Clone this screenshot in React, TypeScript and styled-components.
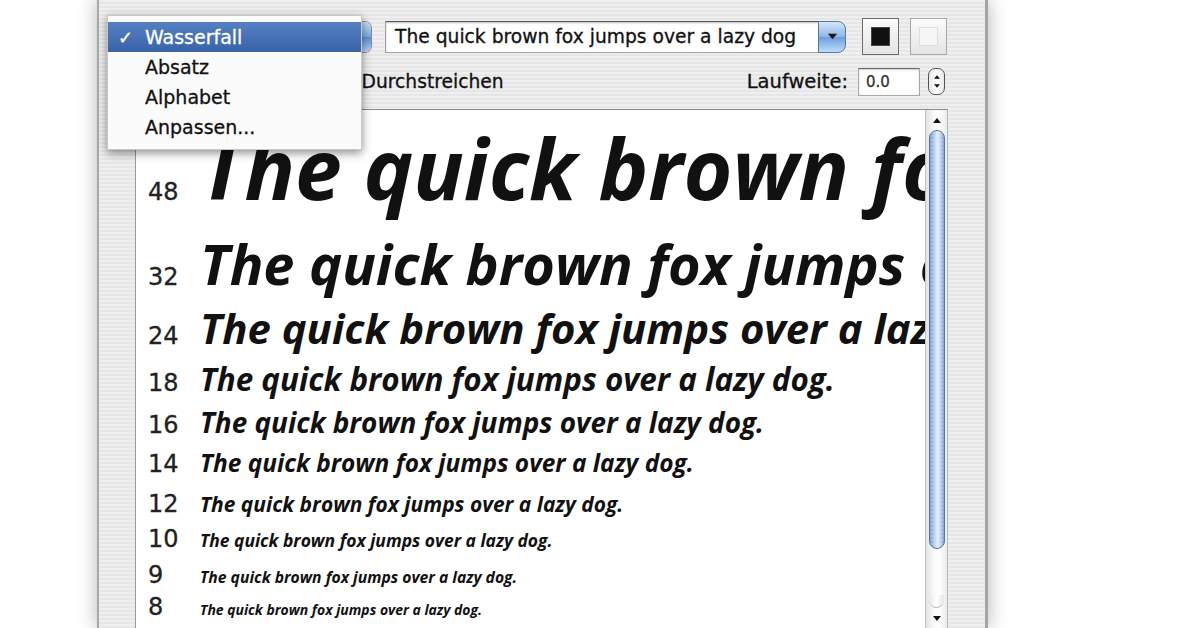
import React from "react";
import styled, { createGlobalStyle } from "styled-components";

const GlobalStyle = createGlobalStyle`
  html, body {
    margin: 0;
    background: #fff;
  }
  body {
    width: 1200px;
    height: 628px;
    overflow: hidden;
  }
`;

const UI_FONT = `"DejaVu Sans", "Liberation Sans", sans-serif`;
const SAMPLE_FONT = `"Open Sans", Lato, sans-serif`;
const SAMPLE = "The quick brown fox jumps over a lazy dog.";

// px per point in this enlarged screenshot, and the sample font's baseline at line-height 1
const SCALE = 1.745;
const SAMPLE_ASC = 0.888;
const NUM_SIZE = 24;
const NUM_ASC = 0.846 * NUM_SIZE;
const LIST_TOP = 108;

const Page = styled.div`
  width: 1200px;
  height: 628px;
  display: flex;
  padding-left: 97px;
  box-sizing: border-box;
`;

const Window = styled.div`
  position: relative;
  width: 891px;
  height: 628px;
  box-sizing: border-box;
  border-left: 2px solid #a9a9a9;
  border-right: 3px solid #a4a4a4;
  box-shadow: 0 0 18px rgba(0, 0, 0, 0.3);
  background: repeating-linear-gradient(180deg, #efefef 0 2px, #e6e6e6 2px 4px);
  display: flex;
  flex-direction: column;
  font-family: ${UI_FONT};
  color: #111;
  -webkit-text-stroke: 0.3px currentColor;
`;

const TopBar = styled.div`
  display: flex;
  align-items: center;
  padding: 18px 0 0 11px;
  height: 37px;
`;

const PopupButton = styled.div`
  width: 262px;
  height: 32px;
  box-sizing: border-box;
  border: 1px solid #8a8a8a;
  border-radius: 7px;
  background: linear-gradient(#fff, #ececec 50%, #dedede 51%, #f6f6f6);
  display: flex;
  align-items: center;
  justify-content: space-between;
  padding-left: 12px;
  font-size: 18px;
  overflow: hidden;
`;

const PopupArrow = styled.div`
  width: 24px;
  height: 100%;
  background: linear-gradient(#c6ddf6, #79a9e2 50%, #5690da 51%, #b3d6fa);
  border-left: 1px solid #5c80b4;
`;

const Combo = styled.div`
  display: flex;
  margin-left: 13px;
  height: 32px;
`;

const ComboField = styled.div`
  width: 435px;
  box-sizing: border-box;
  background: #fff;
  border: 1px solid #a2a2a2;
  border-top-color: #555;
  box-shadow: inset 0 1px 2px rgba(0, 0, 0, 0.25);
  padding-left: 9px;
  display: flex;
  align-items: center;
  font-size: 18.7px;
  white-space: nowrap;
  overflow: hidden;
`;

const ComboButton = styled.div`
  width: 28px;
  margin-left: -2px;
  box-sizing: border-box;
  border: 1px solid #56789f;
  border-radius: 0 8px 8px 0;
  background: linear-gradient(#d5e6f8, #8cb6e6 50%, #6a9fdd 51%, #bfdcfa);
  display: flex;
  align-items: center;
  justify-content: center;
`;

const ColorWell = styled.div<{ $fill: string; $edge: string; $gap: number }>`
  width: 37px;
  height: 37px;
  box-sizing: border-box;
  margin-left: ${(p) => p.$gap}px;
  border: 1px solid ${(p) => p.$edge};
  background: linear-gradient(#fbfbfb, #e4e4e4);
  display: flex;
  align-items: center;
  justify-content: center;

  &::after {
    content: "";
    width: 17px;
    height: 17px;
    background: ${(p) => p.$fill};
    border: 1px solid ${(p) => (p.$fill === "#111" ? "#444" : "#dedede")};
  }
`;

const OptionBar = styled.div`
  display: flex;
  align-items: center;
  justify-content: space-between;
  height: 29px;
  margin-top: 12px;
  padding: 0 40px 0 38px;
  font-size: 18.7px;
`;

const Checks = styled.div`
  display: flex;
  align-items: center;
  gap: 42px;
`;

const CheckItem = styled.label`
  display: flex;
  align-items: center;
  gap: 6px;
`;

const CheckBox = styled.span`
  width: 16px;
  height: 16px;
  box-sizing: border-box;
  border: 1px solid #888;
  border-radius: 3px;
  background: linear-gradient(#fff, #dedede);
`;

const Tracking = styled.div`
  display: flex;
  align-items: center;
  font-size: 19.5px;
`;

const NumField = styled.div`
  width: 62px;
  height: 28px;
  box-sizing: border-box;
  margin-left: 10px;
  background: #fff;
  border: 1px solid #aaa;
  border-top-color: #666;
  box-shadow: inset 0 1px 2px rgba(0, 0, 0, 0.2);
  padding-left: 7px;
  display: flex;
  align-items: center;
  font-size: 15px;
  color: #333;
`;

const Stepper = styled.div`
  width: 17px;
  height: 27px;
  box-sizing: border-box;
  margin-left: 8px;
  border: 1px solid #555;
  border-radius: 7px;
  background: linear-gradient(90deg, #e8e8e8, #fff 50%, #e8e8e8);
  display: flex;
  flex-direction: column;
  align-items: center;
  justify-content: space-around;
  padding: 3px 0;
`;

const Preview = styled.div`
  flex: 1;
  display: flex;
  margin: 13px 0 0 36px;
  width: 813px;
  box-sizing: border-box;
  border-top: 1px solid #8a8a8a;
  border-left: 1px solid #9a9a9a;
  border-right: 1px solid #b8b8b8;
  background: #fff;
  overflow: hidden;
  -webkit-text-stroke: 0;
`;

const Waterfall = styled.div<{ $pad: number }>`
  flex: 1;
  padding: ${(p) => p.$pad}px 0 0 12px;
  overflow: hidden;
`;

const Row = styled.div<{ $h: number }>`
  display: flex;
  align-items: baseline;
  height: ${(p) => p.$h}px;
`;

const Size = styled.span`
  width: 52px;
  flex-shrink: 0;
  font-family: ${UI_FONT};
  font-size: ${NUM_SIZE}px;
  line-height: 1;
  color: #222;
  -webkit-text-stroke: 0.3px currentColor;
`;

const Sample = styled.span<{ $size: number }>`
  font-family: ${SAMPLE_FONT};
  font-style: italic;
  font-weight: 700;
  font-size: ${(p) => p.$size}px;
  line-height: 1;
  white-space: nowrap;
  color: #111;
`;

const ScrollTrack = styled.div`
  width: 21px;
  flex-shrink: 0;
  border-left: 1px solid #c4c4c4;
  background: linear-gradient(90deg, #e2e2e2, #f8f8f8 35%, #fff 60%, #ececec);
  display: flex;
  flex-direction: column;
  align-items: center;
`;

const ArrowCell = styled.div<{ $h: number }>`
  height: ${(p) => p.$h}px;
  display: flex;
  align-items: center;
  justify-content: center;
`;

const Thumb = styled.div`
  width: 16px;
  height: 419px;
  box-sizing: border-box;
  border: 1px solid #4f74a8;
  border-radius: 8px;
  background: repeating-linear-gradient(180deg, rgba(255, 255, 255, 0.15) 0 2px, transparent 2px 4px),
    linear-gradient(90deg, #7a9ccc, #b4cfee 30%, #e4eefa 55%, #b4cfee 78%, #7a9ccc);
`;

const TrackEnd = styled.div`
  margin-top: auto;
  width: 15px;
  height: 12px;
  border-radius: 0 0 8px 8px;
  border-bottom: 1px solid #bbb;
  background: linear-gradient(90deg, #e6e6e6, #fff 50%, #e6e6e6);
`;

const Menu = styled.div`
  position: absolute;
  left: 8px;
  top: 15px;
  width: 253px;
  padding: 6px 0 7px;
  background: #fbfbfb;
  box-shadow: 0 3px 9px rgba(0, 0, 0, 0.45);
  border: 1px solid #c8c8c8;
  z-index: 5;
`;

const MenuItem = styled.div<{ $active?: boolean }>`
  position: relative;
  height: 30px;
  display: flex;
  align-items: center;
  padding-left: 37px;
  font-size: 19px;
  color: ${(p) => (p.$active ? "#fff" : "#111")};
  background: ${(p) => (p.$active ? "linear-gradient(#5580c0, #3863a9)" : "none")};
`;

const Check = styled.span`
  position: absolute;
  left: 10px;
  font-size: 18px;
`;

const Triangle = ({ down = false, w = 9, h = 6 }: { down?: boolean; w?: number; h?: number }) => (
  <svg width={w} height={h} viewBox="0 0 10 6">
    <path d={down ? "M0 0 L10 0 L5 6 Z" : "M0 6 L10 6 L5 0 Z"} fill="#111" />
  </svg>
);

const rows = [
  { pt: 48, base: 198 },
  { pt: 32, base: 284 },
  { pt: 24, base: 342 },
  { pt: 18, base: 389 },
  { pt: 16, base: 432 },
  { pt: 14, base: 471 },
  { pt: 12, base: 510 },
  { pt: 10, base: 545 },
  { pt: 9, base: 581 },
  { pt: 8, base: 613 },
  { pt: 7, base: 645 },
];

const layout = rows.map((r) => {
  const size = r.pt * SCALE;
  const asc = Math.max(size * SAMPLE_ASC, NUM_ASC);
  return { ...r, size, top: r.base - asc };
});

export default function App() {
  const pad = layout[0].top - LIST_TOP;
  return (
    <>
      <GlobalStyle />
      <Page>
        <Window>
          <TopBar>
            <PopupButton>
              Wasserfall
              <PopupArrow />
            </PopupButton>
            <Combo>
              <ComboField>The quick brown fox jumps over a lazy dog</ComboField>
              <ComboButton>
                <Triangle down w={9} h={7} />
              </ComboButton>
            </Combo>
            <ColorWell $fill="#111" $edge="#6c6c6c" $gap={16} />
            <ColorWell $fill="#f6f6f6" $edge="#a8a8a8" $gap={11} />
          </TopBar>

          <OptionBar>
            <Checks>
              <CheckItem>
                <CheckBox />
                Unterstreichen
              </CheckItem>
              <CheckItem>
                <CheckBox />
                Durchstreichen
              </CheckItem>
            </Checks>
            <Tracking>
              Laufweite:
              <NumField>0.0</NumField>
              <Stepper>
                <Triangle w={6} h={4} />
                <Triangle down w={6} h={4} />
              </Stepper>
            </Tracking>
          </OptionBar>

          <Preview>
            <Waterfall $pad={pad}>
              {layout.map((r, i) => {
                const next = layout[i + 1];
                const h = next ? next.top - r.top : 40;
                return (
                  <Row key={r.pt} $h={h}>
                    <Size>{r.pt}</Size>
                    <Sample $size={r.size}>{SAMPLE}</Sample>
                  </Row>
                );
              })}
            </Waterfall>
            <ScrollTrack>
              <ArrowCell $h={20}>
                <Triangle w={8} h={5} />
              </ArrowCell>
              <Thumb />
              <TrackEnd />
              <ArrowCell $h={20}>
                <Triangle down w={8} h={5} />
              </ArrowCell>
            </ScrollTrack>
          </Preview>

          <Menu>
            <MenuItem $active>
              <Check>✓</Check>
              Wasserfall
            </MenuItem>
            <MenuItem>Absatz</MenuItem>
            <MenuItem>Alphabet</MenuItem>
            <MenuItem>Anpassen...</MenuItem>
          </Menu>
        </Window>
      </Page>
    </>
  );
}
